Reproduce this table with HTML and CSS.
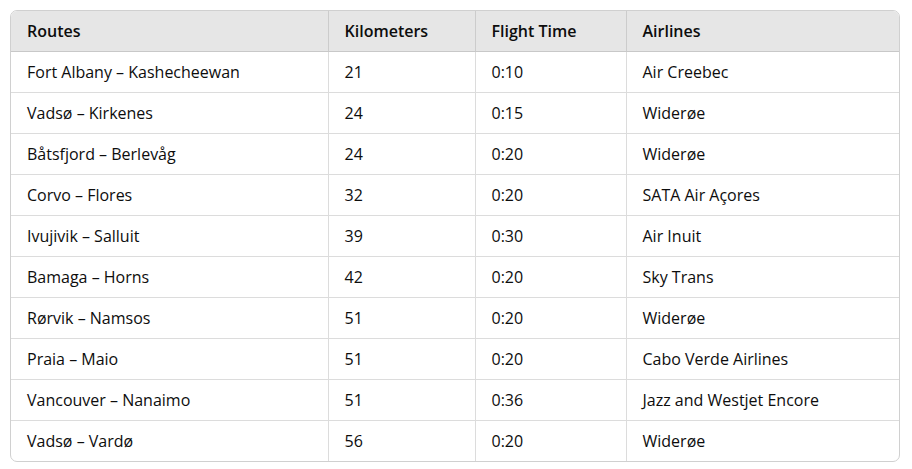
FILE: index.html
```html
<!DOCTYPE html>
<html>
<head>
<meta charset="utf-8">
<link rel="stylesheet" href="styles.css">
</head>
<body>
<div class="wrap">
<table class="routes">
<colgroup>
<col class="c1"><col class="c2"><col class="c3"><col class="c4">
</colgroup>
<thead>
<tr><th>Routes</th><th>Kilometers</th><th>Flight Time</th><th>Airlines</th></tr>
</thead>
<tbody>
<tr><td>Fort Albany – Kashecheewan</td><td>21</td><td>0:10</td><td>Air Creebec</td></tr>
<tr><td>Vadsø – Kirkenes</td><td>24</td><td>0:15</td><td>Widerøe</td></tr>
<tr><td>Båtsfjord – Berlevåg</td><td>24</td><td>0:20</td><td>Widerøe</td></tr>
<tr><td>Corvo – Flores</td><td>32</td><td>0:20</td><td>SATA Air Açores</td></tr>
<tr><td>Ivujivik – Salluit</td><td>39</td><td>0:30</td><td>Air Inuit</td></tr>
<tr><td>Bamaga – Horns</td><td>42</td><td>0:20</td><td>Sky Trans</td></tr>
<tr><td>Rørvik – Namsos</td><td>51</td><td>0:20</td><td>Widerøe</td></tr>
<tr><td>Praia – Maio</td><td>51</td><td>0:20</td><td>Cabo Verde Airlines</td></tr>
<tr><td>Vancouver – Nanaimo</td><td>51</td><td>0:36</td><td>Jazz and Westjet Encore</td></tr>
<tr><td>Vadsø – Vardø</td><td>56</td><td>0:20</td><td>Widerøe</td></tr>
</tbody>
</table>
</div>
</body>
</html>
```

FILE: styles.css
```css
html, body {
  margin: 0;
  padding: 0;
  background: #ffffff;
}
body {
  padding: 10px 0 0 10px;
  font-family: "Open Sans", "Noto Sans", sans-serif;
  color: #0d0d0d;
}
.wrap {
  width: 890px;
  border: 1px solid #d0d0d0;
  border-radius: 7px;
  overflow: hidden;
  box-sizing: border-box;
}
.routes {
  width: 100%;
  border-collapse: collapse;
  table-layout: fixed;
  font-size: 16px;
}
.c1 { width: 317px; }
.c2 { width: 147px; }
.c3 { width: 151px; }
.c4 { width: auto; }
.routes th, .routes td {
  height: 41px;
  padding: 0 16px;
  text-align: left;
  vertical-align: middle;
  box-sizing: border-box;
  white-space: nowrap;
}
.routes th {
  height: 40px;
  background: #e6e6e6;
  font-weight: 600;
  border-left: 1px solid #cccccc;
  border-bottom: 1px solid #c8c8c8;
}
.routes td {
  border-left: 1px solid #dcdcdc;
  border-top: 1px solid #dcdcdc;
}
.routes th:first-child, .routes td:first-child {
  border-left: none;
}
.routes thead + tbody tr:first-child td {
  border-top: none;
}
```
